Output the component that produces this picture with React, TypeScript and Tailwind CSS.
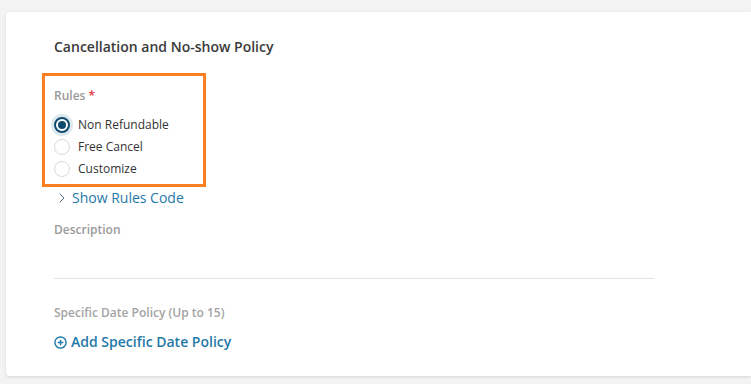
import { ChevronRight } from "lucide-react";

const RULES = ["Non Refundable", "Free Cancel", "Customize"];

function Radio({ checked }: { checked: boolean }) {
  if (checked) {
    return (
      <span className="flex h-4 w-4 items-center justify-center rounded-full border-2 border-[#0f4a6f] bg-white shadow-[0_0_0_3px_#dde8ef]">
        <span className="h-2 w-2 rounded-full bg-[#0f4a6f]" />
      </span>
    );
  }
  return <span className="h-4 w-4 rounded-full border border-[#d9d9d9] bg-white" />;
}

export default function App() {
  return (
    <div className="h-[384px] w-[751px] overflow-hidden bg-[#f3f3f3] pl-[6px] pt-[12px] font-['Open_Sans',sans-serif]">
      <div className="h-[364px] rounded-l-[4px] bg-white pl-[48px] pt-[25px] shadow-[0_1px_3px_rgba(0,0,0,0.12)]">
        <h2 className="text-[14px] leading-[20px] font-semibold text-[#3a3a3a]">Cancellation and No-show Policy</h2>

        <div className="-ml-[12px] mt-[16px] w-[164px] border-[3px] border-[#fa7f22] pb-[7px] pl-[9px] pt-[12px]">
          <div className="text-[12px] leading-[16px] font-semibold text-[#9a9a9a]">
            Rules <span className="text-[#e5353c]">*</span>
          </div>
          <div className="mt-[13px] flex flex-col gap-[6px]">
            {RULES.map((r, i) => (
              <label key={r} className="flex h-4 items-center gap-[8px]">
                <Radio checked={i === 0} />
                <span className="text-[12px] leading-4 text-[#333]">{r}</span>
              </label>
            ))}
          </div>
        </div>

        <button type="button" className="mt-[1px] flex items-center gap-[2px] text-[14px] leading-[20px] text-[#1f79a8]">
          <ChevronRight size={16} strokeWidth={1.5} className="text-[#4f6f86]" />
          Show Rules Code
        </button>

        <div className="mt-[14px] text-[12px] leading-[16px] font-semibold text-[#9a9a9a]">Description</div>

        <div className="mt-[40px] w-[600px] border-t border-[#e4e4e4]" />

        <div className="mt-[26px] text-[12px] leading-[16px] font-semibold text-[#a3a3a3]">Specific Date Policy (Up to 15)</div>

        <button type="button" className="mt-[11px] flex items-center gap-[4px] text-[14px] leading-[20px] font-semibold text-[#1f79a8]">
          <svg width="13" height="13" viewBox="0 0 14 14" fill="none" stroke="currentColor" strokeWidth="1.5">
            <circle cx="7" cy="7" r="6" />
            <path d="M7 4v6M4 7h6" />
          </svg>
          Add Specific Date Policy
        </button>
      </div>
    </div>
  );
}
